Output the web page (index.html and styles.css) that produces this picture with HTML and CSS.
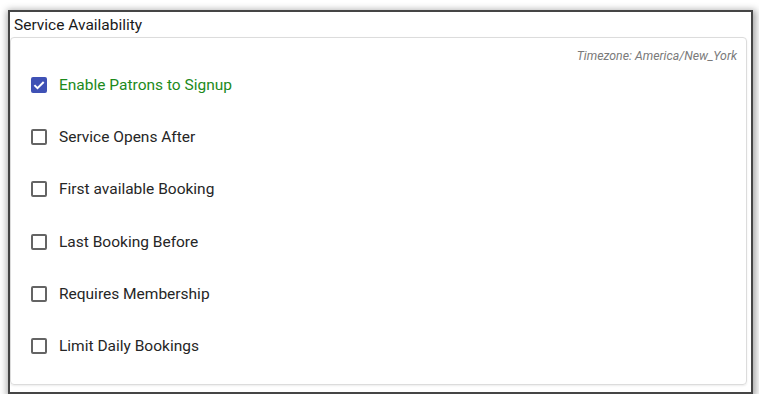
FILE: index.html
```html
<!DOCTYPE html>
<html>
<head>
<meta charset="utf-8">
<link rel="stylesheet" href="styles.css">
</head>
<body>
<div class="frame">
  <div class="title">Service Availability</div>
  <div class="card">
    <div class="tz">Timezone: America/New_York</div>
    <div class="rows">
      <div class="row on"><span class="box checked"><svg viewBox="0 0 16 16" width="16" height="16"><path d="M3.4 8.1 L6.5 11.2 L12.7 5" fill="none" stroke="#fff" stroke-width="2"/></svg></span><span class="label green">Enable Patrons to Signup</span></div>
      <div class="row"><span class="box"></span><span class="label">Service Opens After</span></div>
      <div class="row"><span class="box"></span><span class="label">First available Booking</span></div>
      <div class="row"><span class="box"></span><span class="label">Last Booking Before</span></div>
      <div class="row"><span class="box"></span><span class="label">Requires Membership</span></div>
      <div class="row"><span class="box"></span><span class="label">Limit Daily Bookings</span></div>
    </div>
  </div>
</div>
</body>
</html>
```
FILE: styles.css
```css
html, body {
  margin: 0;
  padding: 0;
  background: #fff;
}
body {
  padding: 10px 0 0 8px;
  font-family: Roboto, "Liberation Sans", sans-serif;
}
.frame {
  box-sizing: border-box;
  width: 745px;
  height: 384px;
  border: 2px solid #454545;
  box-shadow: 1px 2px 7px 2px rgba(0,0,0,0.35);
  background: #fff;
  display: flex;
  flex-direction: column;
}
.title {
  height: 25px;
  line-height: 27px;
  font-size: 15.5px;
  color: #1a1a1a;
  padding-left: 4px;
}
.card {
  box-sizing: border-box;
  width: 737px;
  height: 348px;
  border: 1px solid #dcdcdc;
  border-radius: 4px;
  box-shadow: 0 1px 2px rgba(0,0,0,0.08);
  padding: 11px 9px 0 20px;
}
.tz {
  text-align: right;
  font-size: 12.3px;
  line-height: 14px;
  font-style: italic;
  color: #7a7a7a;
}
.rows {
  display: flex;
  flex-direction: column;
  gap: 28.2px;
  margin-top: 10px;
}
.row {
  height: 24px;
  display: flex;
  align-items: center;
}
.box {
  box-sizing: border-box;
  width: 16px;
  height: 16px;
  border: 2px solid #646464;
  border-radius: 2px;
  margin-right: 12px;
  flex: none;
  position: relative;
}
.box.checked {
  background: #3f51b5;
  border-color: #3f51b5;
}
.box.checked svg {
  position: absolute;
  left: -2px;
  top: -2px;
}
.label {
  font-size: 15.5px;
  color: #262626;
}
.label.green {
  color: #1c8a1c;
}
```
